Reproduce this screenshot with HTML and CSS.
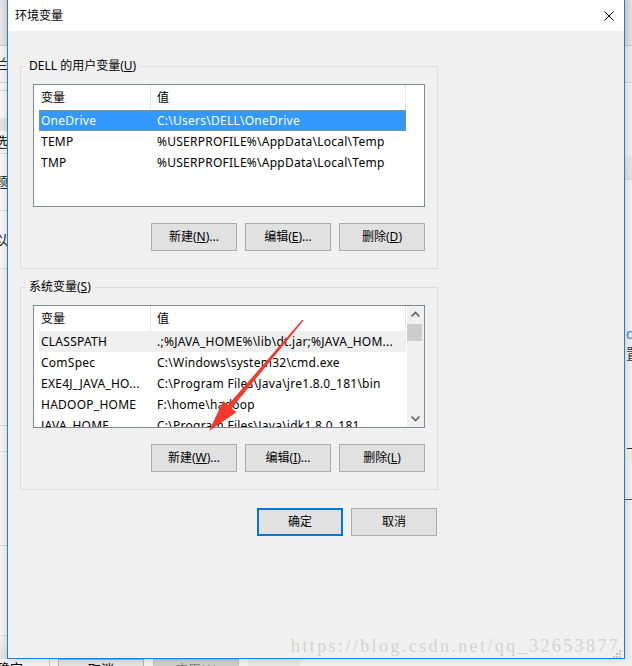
FILE: index.html
```html
<!DOCTYPE html>
<html lang="zh-CN">
<head>
<meta charset="utf-8">
<title>环境变量</title>
<link rel="stylesheet" href="styles.css">
</head>
<body>
<div class="screen">
  <div class="backwin">
    <div class="bw-main">
      <div class="bw-side bw-left">
        <div class="seg l-top"></div>
        <div class="seg l-a"><span class="glyph">兰</span></div>
        <div class="seg l-b"></div>
        <div class="seg l-c"></div>
        <div class="seg l-d"></div>
        <div class="seg l-e"><span class="glyph">选</span></div>
        <div class="seg l-f"><span class="glyph">题</span></div>
        <div class="seg l-g"><span class="glyph">以</span></div>
        <div class="seg l-h"></div>
        <div class="seg l-i"></div>
        <div class="seg l-j"></div>
        <div class="seg l-k"></div>
        <div class="seg l-l"></div>
      </div>
      <div class="bw-side bw-right">
        <div class="seg r-top"></div>
        <div class="seg r-a"></div>
        <div class="seg r-b"></div>
        <div class="seg r-c"></div>
        <div class="seg r-d"></div>
        <div class="seg r-e"><span class="rglyph link">d</span></div>
        <div class="seg r-f"><span class="rglyph">置</span></div>
        <div class="seg r-g"></div>
        <div class="seg r-h"><span class="rglyph">下</span></div>
        <div class="seg r-i"></div>
        <div class="seg r-j"></div>
      </div>
    </div>
    <div class="bw-bottom">
      <span class="bw-ok">确定</span>
      <span class="bw-sep"></span>
      <span class="bw-btn">取消</span>
      <span class="bw-btn disabled">应用(A)</span>
      <span class="bw-shade"></span>
    </div>
  </div>

  <div class="dialog">
    <div class="titlebar">
      <span class="title">环境变量</span>
      <svg class="close" viewBox="0 0 10 10" width="10" height="10"><path d="M0.5 0.5 L9.5 9.5 M9.5 0.5 L0.5 9.5" stroke="#000" stroke-width="1" fill="none"/></svg>
    </div>
    <div class="dialog-body">
      <fieldset class="group">
        <legend>DELL 的用户变量(<u>U</u>)</legend>
        <div class="listview">
          <div class="lv-main">
            <div class="lv-header"><div class="c1">变量</div><div class="c2">值</div></div>
            <div class="lv-row selected"><span class="c1">OneDrive</span><span class="c2">C:\Users\DELL\OneDrive</span></div>
            <div class="lv-row"><span class="c1">TEMP</span><span class="c2">%USERPROFILE%\AppData\Local\Temp</span></div>
            <div class="lv-row"><span class="c1">TMP</span><span class="c2">%USERPROFILE%\AppData\Local\Temp</span></div>
          </div>
        </div>
        <div class="btn-row">
          <button class="btn">新建(<u>N</u>)...</button>
          <button class="btn">编辑(<u>E</u>)...</button>
          <button class="btn">删除(<u>D</u>)</button>
        </div>
      </fieldset>

      <fieldset class="group">
        <legend>系统变量(<u>S</u>)</legend>
        <div class="listview">
          <div class="lv-main">
            <div class="lv-header"><div class="c1">变量</div><div class="c2">值</div></div>
            <div class="lv-row inactive"><span class="c1">CLASSPATH</span><span class="c2">.;%JAVA_HOME%\lib\dt.jar;%JAVA_HOM...</span></div>
            <div class="lv-row"><span class="c1">ComSpec</span><span class="c2">C:\Windows\system32\cmd.exe</span></div>
            <div class="lv-row"><span class="c1">EXE4J_JAVA_HO...</span><span class="c2">C:\Program Files\Java\jre1.8.0_181\bin</span></div>
            <div class="lv-row"><span class="c1">HADOOP_HOME</span><span class="c2">F:\home\hadoop</span></div>
            <div class="lv-row"><span class="c1">JAVA_HOME</span><span class="c2">C:\Program Files\Java\jdk1.8.0_181</span></div>
          </div>
          <div class="scrollbar">
            <div class="sb-btn"><svg viewBox="0 0 17 17" width="17" height="17"><path d="M4.5 10.5 L8.5 6.5 L12.5 10.5" stroke="#606060" stroke-width="1.6" fill="none"/></svg></div>
            <div class="sb-track"><div class="sb-thumb"></div></div>
            <div class="sb-btn"><svg viewBox="0 0 17 17" width="17" height="17"><path d="M4.5 6.5 L8.5 10.5 L12.5 6.5" stroke="#606060" stroke-width="1.6" fill="none"/></svg></div>
          </div>
        </div>
        <div class="btn-row">
          <button class="btn">新建(<u>W</u>)...</button>
          <button class="btn">编辑(<u>I</u>)...</button>
          <button class="btn">删除(<u>L</u>)</button>
        </div>
      </fieldset>

      <div class="btn-row actions">
        <button class="btn default">确定</button>
        <button class="btn">取消</button>
      </div>
    </div>
  </div>

  <svg class="arrow" viewBox="0 0 632 666" width="632" height="666">
    <polygon points="302.5,319.6 227.9,405.1 223.2,401.1 209,431 236.4,412.3 231.7,408.3 303.5,320.4" fill="#ef3a2d"/>
  </svg>
  <div class="watermark">https://blog.csdn.net/qq_32653877</div>
  <svg class="grip" viewBox="0 0 8 8" width="8" height="8">
    <rect x="6" y="0" width="2" height="2" fill="#c4c4c4"/>
    <rect x="3" y="3" width="2" height="2" fill="#c4c4c4"/>
    <rect x="6" y="3" width="2" height="2" fill="#c4c4c4"/>
    <rect x="0" y="6" width="2" height="2" fill="#c4c4c4"/>
    <rect x="3" y="6" width="2" height="2" fill="#c4c4c4"/>
    <rect x="6" y="6" width="2" height="2" fill="#c4c4c4"/>
  </svg>
</div>
</body>
</html>
```

FILE: styles.css
```css
* { box-sizing: border-box; }
html, body { margin: 0; padding: 0; }
body {
  width: 632px;
  height: 666px;
  overflow: hidden;
  font-family: "Noto Sans", "Noto Sans CJK SC", sans-serif;
  font-size: 12px;
  color: #000;
  background: #f0f0f0;
}
.screen { position: relative; width: 632px; height: 666px; overflow: hidden; }

/* background window */
.backwin {
  position: absolute;
  inset: 0;
  display: flex;
  flex-direction: column;
  background: #f0f0f0;
}
.bw-main { flex: 1; display: flex; justify-content: space-between; }
.bw-side { width: 7px; display: flex; flex-direction: column; overflow: hidden; }
.seg { flex: none; display: flex; align-items: center; overflow: hidden; }
.bw-left .seg { justify-content: flex-end; }
.glyph { font-size: 14px; line-height: 16px; margin-right: -1px; white-space: nowrap; color: #222; }
.rglyph { font-size: 14px; line-height: 16px; padding-left: 1px; white-space: nowrap; color: #333; }
.rglyph.link { color: #3b82c8; }

.l-top { height: 45px; background: linear-gradient(90deg, #e6e6e6, #dcdcdc); }
.l-a { height: 37px; border-top: 1px solid #c8c8c8; background: #f3f3f3; }
.l-b { height: 8px; border-top: 1px solid #d6d6d6; background: #f3f3f3; }
.l-c { height: 28px; border-top: 1px solid #d6d6d6; background: #f6f6f6; }
.l-d { height: 13px; background: #e2e2e2; }
.l-e { height: 22px; background: #f6f6f6; }
.l-f { height: 57px; border-top: 1px solid #dadada; background: #f6f6f6; }
.l-g { height: 58px; border-top: 1px solid #dadada; background: #f6f6f6; }
.l-h { height: 157px; border-top: 1px solid #dadada; background: #f3f3f3; }
.l-i { height: 26px; border-top: 1px solid #d6d6d6; background: #f3f3f3; }
.l-j { height: 94px; border-top: 1px solid #d6d6d6; background: #f3f3f3; }
.l-k { height: 90px; border-top: 1px solid #d6d6d6; background: #f3f3f3; }
.l-l { flex: 1; border-top: 1px solid #d6d6d6; background: linear-gradient(#f0f0f0, #e2e2e2); }

.r-top { height: 45px; background: linear-gradient(90deg, #d4d4d4, #e2e2e2); }
.r-a { height: 37px; border-top: 1px solid #c4c4c4; background: #e8e8e8; }
.r-b { height: 73px; border-top: 1px solid #cecece; background: #ececec; }
.r-c { height: 24px; background: linear-gradient(#e6e6e6, #dedede); }
.r-d { height: 145px; border-top: 1px solid #d8d8d8; background: #eeeeee; }
.r-e { height: 20px; background: #eeeeee; }
.r-f { height: 20px; background: #eeeeee; }
.r-g { height: 80px; background: #eeeeee; }
.r-h { height: 20px; background: #eeeeee; }
.r-i { height: 36px; border-bottom: 1px solid #505050; background: #eeeeee; }
.r-j { flex: 1; background: #eeeeee; }

.bw-bottom {
  height: 7px;
  flex: none;
  display: flex;
  align-items: flex-start;
  overflow: hidden;
  background: #f0f0f0;
}
.bw-ok { width: 52px; margin-left: -3px; padding-top: 1px; font-size: 13px; line-height: 16px; white-space: nowrap; }
.bw-sep { width: 1px; height: 7px; background: #c8c8c8; margin-right: 8px; }
.bw-btn {
  width: 86px;
  height: 20px;
  margin-right: 9px;
  border: 1px solid #adadad;
  background: #e1e1e1;
  text-align: center;
  padding-top: 1px;
  font-size: 13px;
  line-height: 16px;
  white-space: nowrap;
}
.bw-btn.disabled { background: #cccccc; border-color: #bfbfbf; color: #838383; }
.bw-shade { width: 52px; height: 7px; background: #e6e6e6; }

/* dialog */
.dialog {
  position: absolute;
  left: 7px;
  top: 0;
  width: 618px;
  height: 659px;
  border: 1px solid #1883d7;
  border-top: 0;
  display: flex;
  flex-direction: column;
  background: #f0f0f0;
  box-shadow: 0 0 6px rgba(0, 0, 0, 0.18);
}
.titlebar {
  height: 31px;
  flex: none;
  background: #fff;
  display: flex;
  align-items: center;
  padding-left: 7px;
}
.title { line-height: 16px; }
.close { margin-left: auto; margin-right: 10px; display: block; }

.dialog-body { flex: 1; padding: 27px 0 0 12px; }

.group {
  width: 418px;
  margin: 0;
  padding: 10px 12px 17px;
  border: 1px solid #dcdcdc;
}
.group + .group { margin-top: 10px; }
.group legend { margin-left: -8px; padding: 0 4px; line-height: 16px; }

.listview {
  width: 392px;
  height: 123px;
  border: 1px solid #828790;
  background: #fff;
  display: flex;
  overflow: hidden;
}
.lv-main { flex: 1; min-width: 0; }
.lv-header { height: 25px; display: flex; }
.lv-header > div { line-height: 25px; border-right: 1px solid #e5e5e5; white-space: nowrap; }
.lv-header .c1 { width: 117px; padding-left: 7px; }
.lv-header .c2 { width: 255px; padding-left: 6px; }

.lv-row {
  height: 21px;
  width: 367px;
  margin-left: 5px;
  display: flex;
  align-items: center;
  white-space: nowrap;
  line-height: 16px;
  letter-spacing: 0.25px;
}
.lv-row .c1 { width: 112px; padding-left: 2px; overflow: hidden; flex: none; }
.lv-row .c2 { width: 255px; padding-left: 6px; overflow: hidden; flex: none; }
.lv-row.selected {
  background: #3399ff;
  color: #fff;
  outline: 1px dotted #d17f2e;
  outline-offset: -1px;
}
.lv-row.inactive { background: #efefef; }

.scrollbar { width: 17px; flex: none; background: #f0f0f0; display: flex; flex-direction: column; }
.sb-btn { height: 17px; flex: none; }
.sb-btn svg { display: block; }
.sb-track { flex: 1; padding: 1px 2px 0 0; }
.sb-thumb { height: 17px; background: #cdcdcd; }

.btn-row { display: flex; justify-content: flex-end; gap: 8px; margin-top: 16px; }
.btn {
  width: 86px;
  height: 28px;
  padding: 0;
  border: 1px solid #adadad;
  background: #e1e1e1;
  font: inherit;
  color: #000;
  line-height: 16px;
}
.btn.default { border: 2px solid #0078d7; }
.actions { width: 418px; margin-top: 18px; padding-right: 1px; }

/* overlays */
.arrow { position: absolute; left: 0; top: 0; pointer-events: none; }
.watermark {
  position: absolute;
  left: 291px;
  top: 637px;
  font-family: "Liberation Serif", serif;
  font-size: 18px;
  line-height: 18px;
  letter-spacing: 2.4px;
  color: #d2d2d2;
  white-space: nowrap;
}
.grip { position: absolute; left: 613px; top: 650px; }
```
